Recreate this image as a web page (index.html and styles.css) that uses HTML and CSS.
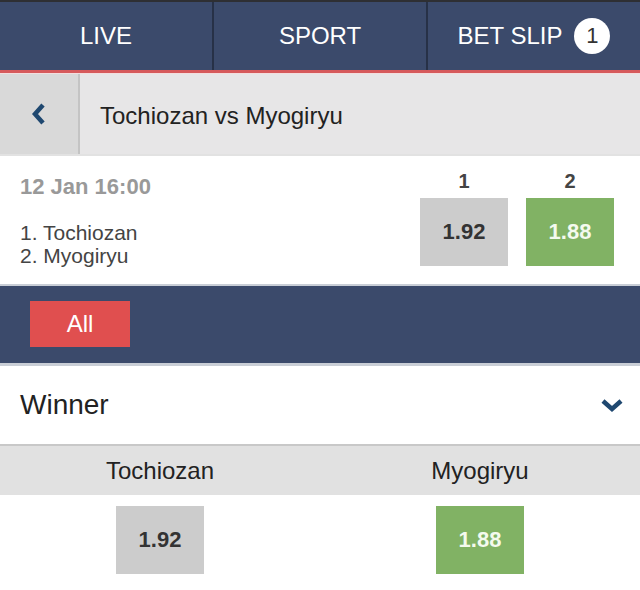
FILE: index.html
```html
<!DOCTYPE html>
<html>
<head>
  <title>Tochiozan vs Myogiryu</title>
  <link rel="stylesheet" href="styles.css">
</head>
<body>
  <div class="nav">
    <div class="nav-item">LIVE</div>
    <div class="nav-item">SPORT</div>
    <div class="nav-item">BET SLIP <span class="badge">1</span></div>
  </div>
  <div class="header">
    <div class="back">
      <svg width="16" height="24" viewBox="0 0 16 24"><path d="M12 3 L4 12 L12 21" fill="none" stroke="#1f4870" stroke-width="4.5"/></svg>
    </div>
    <div class="title">Tochiozan vs Myogiryu</div>
  </div>
  <div class="match">
    <div class="info">
      <div class="date">12 Jan 16:00</div>
      <div class="teams">
        <div>1. Tochiozan</div>
        <div>2. Myogiryu</div>
      </div>
    </div>
    <div class="quick">
      <div class="quick-col">
        <div class="quick-label">1</div>
        <div class="odd grey">1.92</div>
      </div>
      <div class="quick-col">
        <div class="quick-label">2</div>
        <div class="odd green">1.88</div>
      </div>
    </div>
  </div>
  <div class="filter">
    <button class="all">All</button>
  </div>
  <div class="market">
    <div class="market-head">
      <span>Winner</span>
      <svg width="24" height="16" viewBox="0 0 24 16"><path d="M3 4 L12 12 L21 4" fill="none" stroke="#1f4870" stroke-width="4.5"/></svg>
    </div>
    <div class="names">
      <div>Tochiozan</div>
      <div>Myogiryu</div>
    </div>
    <div class="prices">
      <div><div class="odd grey">1.92</div></div>
      <div><div class="odd green">1.88</div></div>
    </div>
  </div>
</body>
</html>
```

FILE: styles.css
```css
body {
  margin: 0;
  font-family: "Liberation Sans", Helvetica, sans-serif;
  background-color: #fff;
  color: #222;
}
.nav {
  display: flex;
  height: 68px;
  background-color: #3b4a6b;
  border-top: 2px solid #2e2f33;
  border-bottom: 3px solid #d65a5c;
}
.nav-item {
  flex: 1;
  display: flex;
  justify-content: center;
  align-items: center;
  color: #fff;
  font-size: 24px;
  border-left: 2px solid #273147;
}
.nav-item:first-child {
  border-left: none;
}
.badge {
  display: inline-flex;
  justify-content: center;
  align-items: center;
  width: 36px;
  height: 36px;
  margin-left: 12px;
  border-radius: 50%;
  background-color: #fff;
  color: #333;
  font-size: 22px;
}
.header {
  display: flex;
  height: 80px;
  background-color: #e7e6e7;
  border-top: 1px solid #f3dede;
  border-bottom: 2px solid #e2e2e2;
}
.back {
  width: 78px;
  display: flex;
  justify-content: center;
  align-items: center;
  background-color: #d9d9d9;
  border-right: 2px solid #c4c4c4;
}
.title {
  display: flex;
  align-items: center;
  padding: 4px 0 0 20px;
  font-size: 24px;
  color: #222;
}
.match {
  display: flex;
  justify-content: space-between;
  height: 128px;
  border-bottom: 2px solid #c9ced6;
}
.info {
  padding: 18px 0 0 20px;
}
.date {
  font-size: 22px;
  font-weight: bold;
  color: #999;
}
.teams {
  margin-top: 21px;
  font-size: 21px;
  line-height: 23px;
  color: #444;
}
.quick {
  display: flex;
  gap: 18px;
  padding: 14px 26px 0 0;
}
.quick-col {
  display: flex;
  flex-direction: column;
  align-items: center;
}
.quick-label {
  font-size: 20px;
  font-weight: bold;
  color: #444;
  height: 28px;
}
.odd {
  width: 88px;
  height: 68px;
  display: flex;
  justify-content: center;
  align-items: center;
  font-size: 22px;
  font-weight: bold;
}
.grey {
  background-color: #cccccc;
  color: #333;
}
.green {
  background-color: #81b264;
  color: #f4faee;
}
.filter {
  height: 77px;
  display: flex;
  align-items: center;
  padding-left: 30px;
  background-color: #3b4a6b;
  border-bottom: 3px solid #c9ced6;
}
.all {
  width: 100px;
  height: 46px;
  border: none;
  background-color: #e04f4f;
  color: #fff;
  font-family: inherit;
  font-size: 24px;
  margin-top: -2px;
}
.market-head {
  height: 78px;
  display: flex;
  justify-content: space-between;
  align-items: center;
  padding: 0 16px 0 20px;
  font-size: 28px;
  color: #222;
  border-bottom: 2px solid #c8c8c8;
}
.names {
  display: grid;
  grid-template-columns: 1fr 1fr;
  height: 49px;
  align-items: center;
  background-color: #e1e1e1;
  font-size: 24px;
  text-align: center;
}
.prices {
  display: grid;
  grid-template-columns: 1fr 1fr;
  padding-top: 11px;
}
.prices > div {
  display: flex;
  justify-content: center;
}
```
